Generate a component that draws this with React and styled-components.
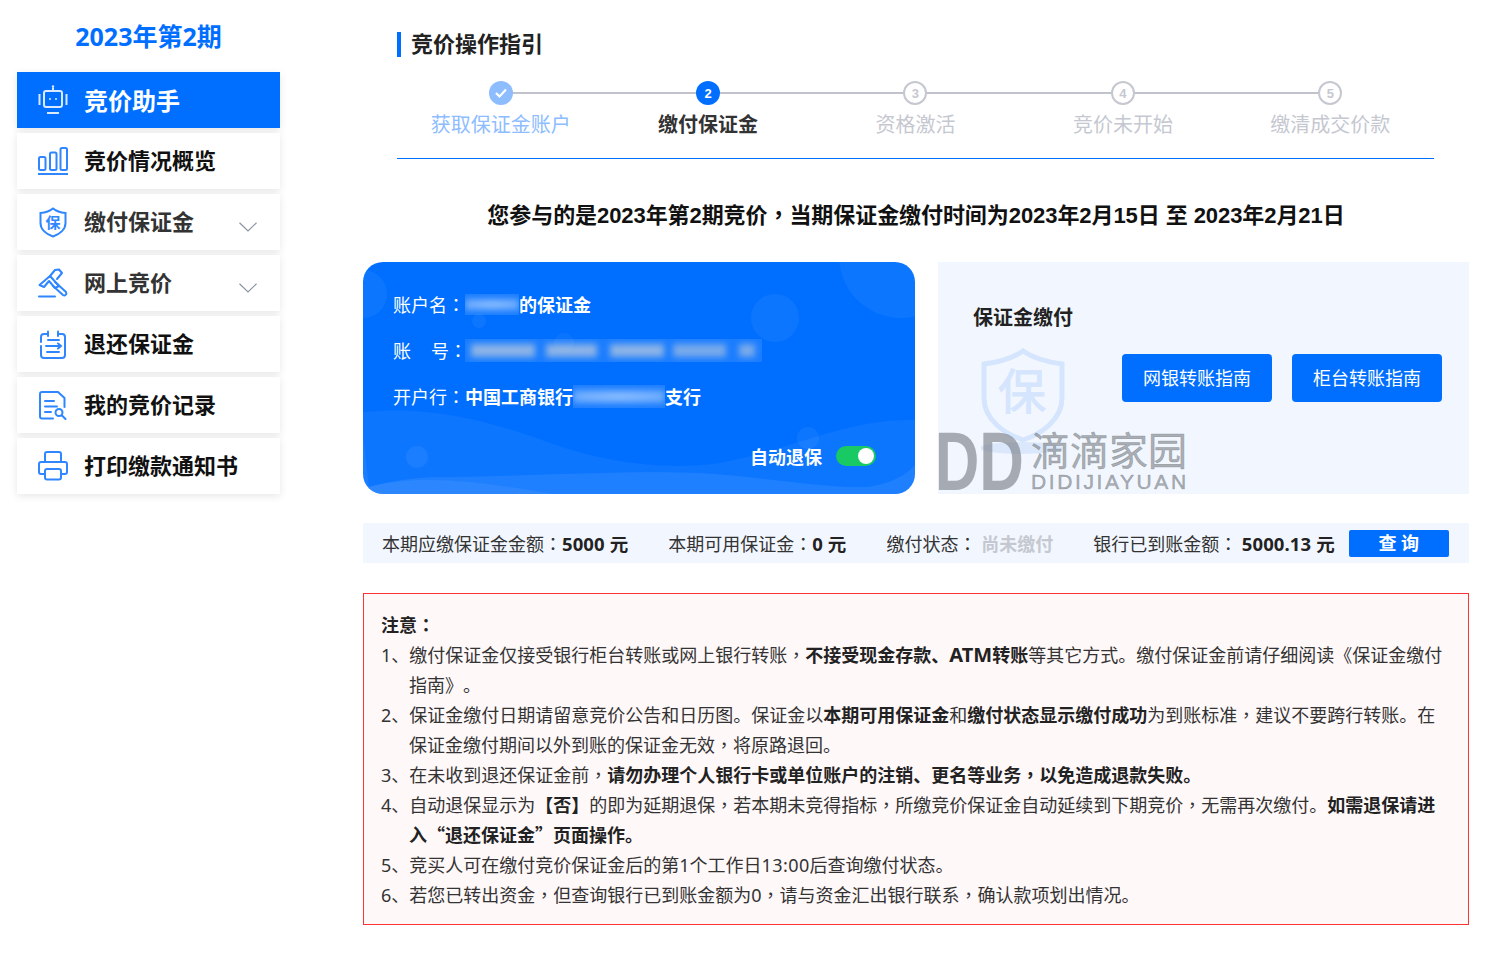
import React from 'react';
import styled, { createGlobalStyle } from 'styled-components';

const GlobalStyle = createGlobalStyle`
  body {
    margin: 0;
    background: #fff;
    color: #333;
    font-family: "Noto Sans", "Noto Sans CJK SC", sans-serif;
  }
`;

const BLUE = '#006fff';
const ICON = '#2f86ff';

const Page = styled.div`
  display: flex;
  width: 1504px;
  height: 959px;
  overflow: hidden;
  background: #fff;
`;

// 左侧菜单
const Sidebar = styled.aside`
  width: 263px;
  margin-left: 17px;
  margin-right: 83px;
  flex-shrink: 0;
`;

const PeriodTitle = styled.h2`
  margin: 0;
  height: 72px;
  line-height: 72px;
  text-align: center;
  font-size: 25px;
  font-weight: 700;
  color: ${BLUE};
`;

const Menu = styled.nav`
  display: flex;
  flex-direction: column;
  gap: 5px;
`;

const MenuItem = styled.div`
  display: flex;
  align-items: center;
  height: 56px;
  padding: 0 23px 0 20px;
  box-sizing: border-box;
  background: ${(p) => (p.$active ? BLUE : '#fff')};
  color: ${(p) => (p.$active ? '#fff' : p.$sub ? '#333' : '#111')};
  box-shadow: 0 2px 8px rgba(0, 0, 0, 0.1);
  font-size: ${(p) => (p.$active ? 24 : 22)}px;
  font-weight: 700;
`;

const MenuIcon = styled.span`
  display: flex;
  justify-content: center;
  width: 32px;
  margin-right: 15px;
  color: ${(p) => (p.$active ? '#d9e9ff' : ICON)};
`;

const MenuLabel = styled.span`
  flex: 1;
  margin-top: ${(p) => (p.$active ? -1 : -5)}px;
`;

const Chevron = () => (
  <svg width="18" height="10" viewBox="0 0 18 10" style={{ marginTop: 10 }}>
    <polyline points="0.5,0.8 9,9 17.5,0.8" fill="none" stroke="#8a94a3" strokeWidth="1.2" />
  </svg>
);

const RobotIcon = () => (
  <svg width="30" height="30" viewBox="0 0 30 30" fill="none" stroke="currentColor" strokeWidth="2">
    <rect x="6" y="6" width="18" height="16" rx="2" />
    <line x1="15" y1="2.5" x2="15" y2="6" />
    <circle cx="15" cy="1.5" r="1.2" fill="currentColor" stroke="none" />
    <line x1="1.5" y1="9" x2="1.5" y2="20" />
    <line x1="28.5" y1="9" x2="28.5" y2="20" />
    <line x1="9" y1="28" x2="21" y2="28" />
    <circle cx="12" cy="14" r="1" fill="currentColor" stroke="none" />
    <circle cx="18" cy="14" r="1" fill="currentColor" stroke="none" />
  </svg>
);

const BarsIcon = () => (
  <svg width="30" height="28" viewBox="0 0 30 28" fill="none" stroke="currentColor" strokeWidth="2">
    <rect x="1" y="10" width="6.5" height="13" rx="1.5" />
    <rect x="12" y="5.5" width="6.5" height="17.5" rx="1.5" />
    <rect x="22.5" y="1" width="6.5" height="22" rx="1.5" />
    <line x1="0" y1="27" x2="30" y2="27" strokeWidth="2" />
  </svg>
);

const ShieldIcon = () => (
  <svg width="28" height="31" viewBox="0 0 28 31" fill="none" stroke="currentColor" strokeWidth="2">
    <path d="M14 1.5 C11 4 7 5.5 1.5 6 V16 C1.5 23 8 27.5 14 29.5 C20 27.5 26.5 23 26.5 16 V6 C21 5.5 17 4 14 1.5 Z" />
    <text x="14" y="21" textAnchor="middle" fontSize="15" fontWeight="700" fill="currentColor" stroke="none">保</text>
  </svg>
);

const GavelIcon = () => (
  <svg width="30" height="30" viewBox="0 0 30 30" fill="none" stroke="currentColor" strokeWidth="2" strokeLinejoin="round" strokeLinecap="round">
    <path d="M1.5 17 L12 8 L21 18 L17 20 L11 13 L6 19 Z" />
    <path d="M12 8 L17 2 L21 1.5 L24 5 L19 11" />
    <path d="M17 14 L28 24 C29 26 27 28.5 25 27 L15 18" />
    <line x1="1" y1="28.5" x2="17" y2="28.5" />
  </svg>
);

const ReturnIcon = () => (
  <svg width="26" height="29" viewBox="0 0 26 29" fill="none" stroke="currentColor" strokeWidth="2" strokeLinecap="round">
    <path d="M7 4 H4 C2 4 1 5 1 7 V12 M19 4 H22 C24 4 25 5 25 7 V25 C25 27 24 28 22 28 H4 C2 28 1 27 1 25 V16" />
    <line x1="8" y1="1.5" x2="8" y2="6" />
    <line x1="18" y1="1.5" x2="18" y2="6" />
    <line x1="8" y1="10" x2="19" y2="10" />
    <path d="M6 16 H21 M18 13.5 L21 16 L18 18.5" />
    <line x1="7" y1="22" x2="19" y2="22" />
  </svg>
);

const RecordIcon = () => (
  <svg width="28" height="29" viewBox="0 0 28 29" fill="none" stroke="currentColor" strokeWidth="2" strokeLinecap="round">
    <path d="M14 27.5 H3 C2 27.5 1 26.5 1 25.5 V3 C1 2 2 1 3 1 H19 L25.5 7 V16" />
    <line x1="6" y1="10" x2="15" y2="10" />
    <line x1="6" y1="15.5" x2="18" y2="15.5" />
    <line x1="6" y1="21" x2="12" y2="21" />
    <circle cx="20" cy="21.5" r="3.5" />
    <line x1="23" y1="24.5" x2="26.5" y2="28" />
  </svg>
);

const PrintIcon = () => (
  <svg width="30" height="30" viewBox="0 0 30 30" fill="none" stroke="currentColor" strokeWidth="2" strokeLinejoin="round">
    <path d="M7 11 V3 C7 2 8 1 9 1 H21 C22 1 23 2 23 3 V11" />
    <path d="M7 23 H3 C2 23 1 22 1 21 V13 C1 12 2 11 3 11 H27 C28 11 29 12 29 13 V21 C29 22 28 23 27 23 H23" />
    <rect x="7" y="18" width="16" height="10.5" rx="2" />
  </svg>
);

const menuItems = [
  { label: '竞价助手', icon: <RobotIcon />, active: true },
  { label: '竞价情况概览', icon: <BarsIcon /> },
  { label: '缴付保证金', icon: <ShieldIcon />, sub: true },
  { label: '网上竞价', icon: <GavelIcon />, sub: true },
  { label: '退还保证金', icon: <ReturnIcon /> },
  { label: '我的竞价记录', icon: <RecordIcon /> },
  { label: '打印缴款通知书', icon: <PrintIcon /> },
];

// 右侧内容
const Main = styled.main`
  width: 1106px;
  flex-shrink: 0;
`;

const Guide = styled.section`
  margin: 0 35px 0 34px;
  padding-top: 32px;
`;

const GuideTitle = styled.h3`
  margin: 0;
  height: 25px;
  line-height: 23px;
  padding-left: 10px;
  border-left: 4px solid ${BLUE};
  font-size: 22px;
  font-weight: 700;
  color: #222;
`;

const Steps = styled.div`
  display: grid;
  grid-template-columns: repeat(5, 1fr);
  margin-top: 24px;
  padding-bottom: 18px;
  border-bottom: 1px solid ${BLUE};
`;

const Step = styled.div`
  position: relative;
  display: flex;
  flex-direction: column;
  align-items: center;

  &:not(:last-child)::after {
    content: '';
    position: absolute;
    top: 11px;
    left: 50%;
    width: 100%;
    height: 2px;
    background: #c0c3cc;
  }
`;

const StepDot = styled.span`
  position: relative;
  z-index: 1;
  display: flex;
  align-items: center;
  justify-content: center;
  box-sizing: border-box;
  width: 24px;
  height: 24px;
  border-radius: 50%;
  font: 700 13px "Liberation Sans", sans-serif;
  color: ${(p) => (p.$state === 'todo' ? '#c5c8d0' : '#fff')};
  background: ${(p) => (p.$state === 'done' ? '#8dbcff' : p.$state === 'now' ? BLUE : '#fff')};
  border: ${(p) => (p.$state === 'todo' ? '2px solid #c5c8d0' : 'none')};
`;

const StepLabel = styled.span`
  margin-top: 5px;
  line-height: 30px;
  font-size: 20px;
  font-weight: ${(p) => (p.$state === 'now' ? 700 : 400)};
  color: ${(p) => (p.$state === 'done' ? '#8dbcff' : p.$state === 'now' ? '#333' : '#c5c8d0')};
`;

const Notice = styled.h1`
  margin: 37px 0 26px;
  line-height: 40px;
  text-align: center;
  font-family: "Liberation Sans", "Noto Sans CJK SC", sans-serif;
  font-size: 22px;
  font-weight: 700;
  letter-spacing: -0.07px;
  color: #111;
`;

const Cards = styled.div`
  display: grid;
  grid-template-columns: 552px 531px;
  gap: 23px;
  height: 232px;
`;

const AccountCard = styled.div`
  position: relative;
  overflow: hidden;
  box-sizing: border-box;
  padding: 19px 39px 0 30px;
  border-radius: 20px;
  background: ${BLUE};
  color: #fff;
  font-size: 18px;
`;

const CardArt = styled.svg`
  position: absolute;
  inset: 0;
`;

const AccountRow = styled.div`
  position: relative;
  display: flex;
  align-items: center;
  height: 46px;
  white-space: pre;
`;

const SpacedLabel = styled.span`
  width: 56px;
  text-align-last: justify;
`;

const NarrowColon = styled.span`
  width: 16px;
  font-family: "Noto Sans CJK TC", sans-serif;
`;

const Strong = styled.b`
  font-weight: 700;
`;

const Redact = styled.span`
  position: relative;
  display: inline-block;
  overflow: hidden;
  width: ${(p) => p.$w}px;
  height: ${(p) => p.$h}px;
  background: rgba(255, 255, 255, 0.1);

  &::after {
    content: '';
    position: absolute;
    inset: 5px 0;
    background: ${(p) => p.$blots};
    filter: blur(3px);
  }
`;

const AutoRow = styled.div`
  position: relative;
  display: flex;
  align-items: center;
  justify-content: flex-end;
  gap: 14px;
  height: 34px;
  margin-top: 20px;
  font-weight: 700;
`;

const Toggle = styled.span`
  display: flex;
  align-items: center;
  justify-content: flex-end;
  box-sizing: border-box;
  width: 40px;
  height: 20px;
  padding-right: 2px;
  border-radius: 10px;
  background: #18c964;

  &::after {
    content: '';
    width: 16px;
    height: 16px;
    border-radius: 50%;
    background: #fff;
  }
`;

const PayPanel = styled.div`
  position: relative;
  padding: 41px 27px 0 35px;
  background: #f2f7ff;
`;

const PayTitle = styled.div`
  line-height: 30px;
  font-size: 20px;
  font-weight: 700;
  color: #222;
`;

const GuideButtons = styled.div`
  position: relative;
  z-index: 1;
  display: flex;
  justify-content: flex-end;
  gap: 20px;
  margin-top: 21px;
`;

const GuideButton = styled.button`
  width: 150px;
  height: 48px;
  padding: 0 0 3px;
  border: none;
  border-radius: 4px;
  background: ${BLUE};
  color: #fff;
  font: inherit;
  font-size: 18px;
`;

const WatermarkShield = styled.svg`
  position: absolute;
  left: 43px;
  top: 86px;
`;

const Watermark = styled.div`
  position: absolute;
  left: 0;
  bottom: 2px;
  display: flex;
  gap: 9px;
  color: rgba(120, 125, 132, 0.62);
`;

const WatermarkLogo = styled.span`
  width: 86px;
  margin-left: -2px;
  font: 700 60px/60px "Liberation Sans", sans-serif;
  transform: scale(1.03, 1.38);
`;

const WatermarkText = styled.div`
  display: flex;
  flex-direction: column;
  margin-top: -2px;
  font-size: 39px;
  line-height: 39px;
  white-space: nowrap;
  -webkit-text-stroke: 0.5px rgba(120, 125, 132, 0.62);
`;

const WatermarkLatin = styled.span`
  margin-top: 3px;
  font: 400 21px/19px "Liberation Sans", sans-serif;
  letter-spacing: 2.6px;
`;

const StatusBar = styled.div`
  display: flex;
  align-items: center;
  gap: 40px;
  height: 40px;
  margin-top: 29px;
  padding: 0 20px 0 19px;
  background: #f2f7ff;
  font-size: 18px;
  white-space: pre;
`;

const StatusValue = styled.b`
  font-weight: 700;
  font-size: ${(p) => (p.$muted ? 18 : 18.5)}px;
  letter-spacing: ${(p) => (p.$muted ? 0 : 0.1)}px;
  color: ${(p) => (p.$muted ? '#c5c8d0' : '#222')};
`;

const QueryButton = styled.button`
  flex-shrink: 0;
  width: 100px;
  height: 27px;
  margin-left: -26px;
  padding: 0;
  border: none;
  border-radius: 2px;
  background: ${BLUE};
  color: #fff;
  font: inherit;
  font-size: 18px;
  font-weight: 700;
  line-height: 27px;
`;

const NoteBox = styled.section`
  margin-top: 30px;
  padding: 16px 17px 14px;
  border: 1px solid #ff3333;
  background: #fff8f9;
  font-size: 18px;
  line-height: 30px;
  color: #333;
  text-spacing-trim: space-all;
`;

const NoteTitle = styled.div`
  font-weight: 700;
  color: #222;
`;

const NoteItem = styled.div`
  padding-left: 28px;
  text-indent: -28px;
`;

const NoteStrong = styled.b`
  font-weight: 700;
  color: #222;
`;

const LargeLatin = styled.span`
  font-size: 20px;
  line-height: 1;
`;

const WideLatin = styled.span`
  letter-spacing: 0.4px;
`;

// 居中的标点
const Mark = styled.span`
  font-family: "Noto Sans CJK TC", sans-serif;
  line-height: 1;
`;

const steps = [
  { label: '获取保证金账户', state: 'done' },
  { label: '缴付保证金', state: 'now', mark: '2' },
  { label: '资格激活', state: 'todo', mark: '3' },
  { label: '竞价未开始', state: 'todo', mark: '4' },
  { label: '缴清成交价款', state: 'todo', mark: '5' },
];

const whiteBlots = 'radial-gradient(ellipse at center, rgba(255,255,255,0.5), rgba(255,255,255,0.3))';
const numberBlots = `linear-gradient(90deg,
  transparent 6px, rgba(215,215,215,0.6) 6px 70px, transparent 70px 81px,
  rgba(215,215,215,0.6) 81px 132px, transparent 132px 145px,
  rgba(215,215,215,0.6) 145px 199px, transparent 199px 208px,
  rgba(215,215,215,0.5) 208px 261px, transparent 261px 274px,
  rgba(215,215,215,0.5) 274px 290px, transparent 290px)`;

const App = () => (
  <Page>
    <GlobalStyle />
    <Sidebar>
      <PeriodTitle>2023年第2期</PeriodTitle>
      <Menu>
        {menuItems.map((item) => (
          <MenuItem key={item.label} $active={item.active} $sub={item.sub}>
            <MenuIcon $active={item.active}>{item.icon}</MenuIcon>
            <MenuLabel $active={item.active}>{item.label}</MenuLabel>
            {item.sub && <Chevron />}
          </MenuItem>
        ))}
      </Menu>
    </Sidebar>

    <Main>
      <Guide>
        <GuideTitle>竞价操作指引</GuideTitle>
        <Steps>
          {steps.map((step) => (
            <Step key={step.label}>
              <StepDot $state={step.state}>
                {step.mark || (
                  <svg width="14" height="12" viewBox="0 0 14 12">
                    <polyline points="2,6 5.5,9.5 12,2.5" fill="none" stroke="#fff" strokeWidth="2.2" />
                  </svg>
                )}
              </StepDot>
              <StepLabel $state={step.state}>{step.label}</StepLabel>
            </Step>
          ))}
        </Steps>
      </Guide>

      <Notice>
        您参与的是2023年第2期竞价<Mark>，</Mark>当期保证金缴付时间为2023年2月15日 至 2023年2月21日
      </Notice>

      <Cards>
        <AccountCard>
          <CardArt width="552" height="232" viewBox="0 0 552 232">
            <circle cx="538" cy="-6" r="62" fill="rgba(255,255,255,0.05)" />
            <circle cx="0" cy="32" r="24" fill="rgba(255,255,255,0.05)" />
            <circle cx="412" cy="56" r="24" fill="rgba(255,255,255,0.05)" />
            <circle cx="116" cy="59" r="7" fill="rgba(255,255,255,0.05)" />
            <circle cx="201" cy="81" r="10" fill="rgba(255,255,255,0.04)" />
            <circle cx="54" cy="195" r="11" fill="rgba(255,255,255,0.06)" />
            <circle cx="445" cy="176" r="11" fill="rgba(255,255,255,0.05)" />
            <path d="M0 150 C70 143 130 160 190 182 C240 200 300 208 350 202 C420 192 480 156 552 158 V232 H0 Z" fill="rgba(255,255,255,0.05)" />
            <path d="M0 226 C25 220 50 215 76 215 C150 215 260 208 337 211 C400 215 460 226 501 225 C525 224 545 212 552 203 V232 H0 Z" fill="rgba(255,255,255,0.08)" />
            <path d="M0 173 L6 225 C60 210 130 222 190 232 H0 Z" fill="rgba(255,255,255,0.06)" />
          </CardArt>
          <AccountRow>
            账户名<Mark>：</Mark><Redact $w={54} $h={21} $blots={whiteBlots} /><Strong>的保证金</Strong>
          </AccountRow>
          <AccountRow>
            <SpacedLabel>账 号</SpacedLabel><NarrowColon>：</NarrowColon><Redact $w={297} $h={23} $blots={numberBlots} />
          </AccountRow>
          <AccountRow>
            开户行<Mark>：</Mark><Strong>中国工商银行</Strong><Redact $w={92} $h={23} $blots={whiteBlots} /><Strong>支行</Strong>
          </AccountRow>
          <AutoRow>
            自动退保
            <Toggle />
          </AutoRow>
        </AccountCard>

        <PayPanel>
          <WatermarkShield width="84" height="110" viewBox="0 0 84 110">
            <ellipse cx="40" cy="100" rx="42" ry="6" fill="#dbe8fb" />
            <path d="M42 3 C32 10 18 14 3 16 V50 C3 72 24 86 42 92 C60 86 81 72 81 50 V16 C66 14 52 10 42 3 Z" fill="none" stroke="#d4e5fd" strokeWidth="5" />
            <text x="41" y="61" textAnchor="middle" fontSize="48" fill="#d4e5fd" stroke="#d4e5fd" strokeWidth="1">保</text>
          </WatermarkShield>
          <PayTitle>保证金缴付</PayTitle>
          <GuideButtons>
            <GuideButton>网银转账指南</GuideButton>
            <GuideButton>柜台转账指南</GuideButton>
          </GuideButtons>
          <Watermark>
            <WatermarkLogo>DD</WatermarkLogo>
            <WatermarkText>
              滴滴家园
              <WatermarkLatin>DIDIJIAYUAN</WatermarkLatin>
            </WatermarkText>
          </Watermark>
        </PayPanel>
      </Cards>

      <StatusBar>
        <span>本期应缴保证金金额<Mark>：</Mark><StatusValue>5000 元</StatusValue></span>
        <span>本期可用保证金<Mark>：</Mark><StatusValue>0 元</StatusValue></span>
        <span>缴付状态<Mark>：</Mark> <StatusValue $muted>尚未缴付</StatusValue></span>
        <span>银行已到账金额<Mark>：</Mark> <StatusValue>5000.13 元</StatusValue></span>
        <QueryButton>查 询</QueryButton>
      </StatusBar>

      <NoteBox>
        <NoteTitle>注意<Mark>：</Mark></NoteTitle>
        <NoteItem>
          1、缴付保证金仅接受银行柜台转账或网上银行转账<Mark>，</Mark><NoteStrong>不接受现金存款、<LargeLatin>ATM</LargeLatin>转账</NoteStrong>等其它方式。缴付保证金前请仔细阅读《保证金缴付<br />指南》。
        </NoteItem>
        <NoteItem>
          2、保证金缴付日期请留意竞价公告和日历图。保证金以<NoteStrong>本期可用保证金</NoteStrong>和<NoteStrong>缴付状态显示缴付成功</NoteStrong>为到账标准<Mark>，</Mark>建议不要跨行转账。在<br />保证金缴付期间以外到账的保证金无效<Mark>，</Mark>将原路退回。
        </NoteItem>
        <NoteItem>
          3、在未收到退还保证金前<Mark>，</Mark><NoteStrong>请勿办理个人银行卡或单位账户的注销、更名等业务<Mark>，</Mark>以免造成退款失败。</NoteStrong>
        </NoteItem>
        <NoteItem>
          4、自动退保显示为<NoteStrong>【否】</NoteStrong>的即为延期退保<Mark>，</Mark>若本期未竞得指标<Mark>，</Mark>所缴竞价保证金自动延续到下期竞价<Mark>，</Mark>无需再次缴付。<NoteStrong>如需退保请进<br />入<Mark>“</Mark>退还保证金<Mark>”</Mark>页面操作。</NoteStrong>
        </NoteItem>
        <NoteItem>
          5、竞买人可在缴付竞价保证金后的第1个工作日<WideLatin>13:00</WideLatin>后查询缴付状态。
        </NoteItem>
        <NoteItem>
          6、若您已转出资金<Mark>，</Mark>但查询银行已到账金额为0<Mark>，</Mark>请与资金汇出银行联系<Mark>，</Mark>确认款项划出情况。
        </NoteItem>
      </NoteBox>
    </Main>
  </Page>
);

export default App;
